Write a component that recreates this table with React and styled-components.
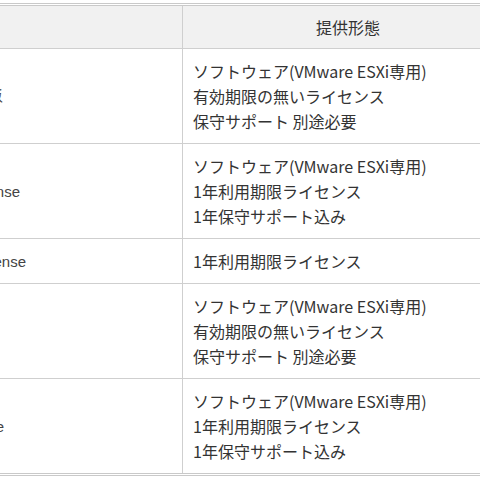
import React from "react";
import styled, { createGlobalStyle } from "styled-components";

const Global = createGlobalStyle`
  html, body { margin: 0; padding: 0; background: #fff; overflow: hidden; }
  body { width: 480px; height: 480px; }
`;

const Table = styled.table`
  margin: 3px 0 0 -200px;
  border-collapse: separate;
  border-spacing: 0;
  table-layout: fixed;
  width: 713px;
  border-top: 3px double #c9c9c9;
  border-bottom: 3px double #c9c9c9;
  font-family: "Noto Sans CJK JP", "Noto Sans", sans-serif;
  color: #333;
`;

const HeadCell = styled.th`
  box-sizing: border-box;
  height: 43px;
  padding: 0;
  background: #f1f1f1;
  border-bottom: 1px solid #cfcfcf;
  ${(p) => (p.$first ? "border-right: 1px solid #cfcfcf;" : "")}
  font-weight: normal;
  font-size: 16px;
  text-align: center;
  vertical-align: middle;
`;

const NameCell = styled.td`
  box-sizing: border-box;
  padding: 10px 0 9px 10px;
  border-right: 1px solid #cfcfcf;
  border-bottom: ${(p) => (p.$last ? "none" : "1px solid #cfcfcf")};
  font-family: "Liberation Sans", Arial, sans-serif;
  font-size: 15px;
  color: #444;
  vertical-align: middle;
`;

const NameText = styled.div`
  display: flex;
  justify-content: flex-end;
  white-space: nowrap;
  padding-right: ${(p) => p.$trim}px;
`;

const FormCell = styled.td`
  box-sizing: border-box;
  padding: 10px 10px 9px 10px;
  border-bottom: ${(p) => (p.$last ? "none" : "1px solid #cfcfcf")};
  font-size: 16px;
  line-height: 25px;
  white-space: nowrap;
  vertical-align: middle;
`;

const Line = styled.div``;

const rows = [
  {
    name: "永続版",
    trim: 179,
    lines: ["ソフトウェア(VMware ESXi専用)", "有効期限の無いライセンス", "保守サポート 別途必要"],
  },
  {
    name: "License",
    trim: 162,
    lines: ["ソフトウェア(VMware ESXi専用)", "1年利用期限ライセンス", "1年保守サポート込み"],
  },
  {
    name: "License",
    trim: 156,
    lines: ["1年利用期限ライセンス"],
  },
  {
    name: "永続版",
    trim: 200,
    lines: ["ソフトウェア(VMware ESXi専用)", "有効期限の無いライセンス", "保守サポート 別途必要"],
  },
  {
    name: "License",
    trim: 178,
    lines: ["ソフトウェア(VMware ESXi専用)", "1年利用期限ライセンス", "1年保守サポート込み"],
  },
];

export default function App() {
  return (
    <>
      <Global />
      <Table>
        <colgroup>
          <col style={{ width: 383 }} />
          <col style={{ width: 330 }} />
        </colgroup>
        <thead>
          <tr>
            <HeadCell $first />
            <HeadCell>提供形態</HeadCell>
          </tr>
        </thead>
        <tbody>
          {rows.map((r, i) => (
            <tr key={i}>
              <NameCell $last={i === rows.length - 1}>
                <NameText $trim={r.trim}>{r.name}</NameText>
              </NameCell>
              <FormCell $last={i === rows.length - 1}>
                {r.lines.map((l, j) => (
                  <Line key={j}>{l}</Line>
                ))}
              </FormCell>
            </tr>
          ))}
        </tbody>
      </Table>
    </>
  );
}
